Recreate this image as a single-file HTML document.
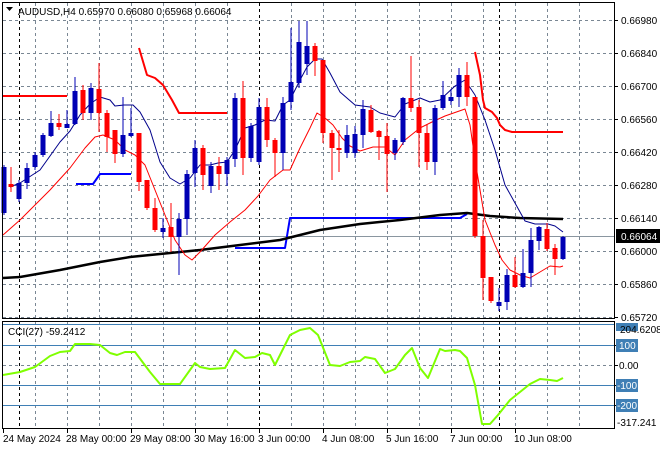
<!DOCTYPE html>
<html><head><meta charset="utf-8"><style>
html,body{margin:0;padding:0;background:#fff;width:660px;height:450px;overflow:hidden}
svg{display:block}
text{font-family:"Liberation Sans",sans-serif;font-size:10px;fill:#000}
</style></head><body>
<svg width="660" height="450" viewBox="0 0 660 450" xmlns="http://www.w3.org/2000/svg">
<rect width="660" height="450" fill="#fff"/>
<g stroke="#7a8794" stroke-width="1" stroke-dasharray="3,3" shape-rendering="crispEdges">
<path d="M3 20.5H614M3 53.5H614M3 86.5H614M3 119.5H614M3 152.5H614M3 185.5H614M3 218.5H614M3 251.5H614M3 284.5H614M3 317.5H614M3 365.5H614"/>
<path d="M35.5 3V428M67.5 3V428M99.5 3V428M131.5 3V428M163.5 3V428M195.5 3V428M227.5 3V428M291.5 3V428M323.5 3V428M355.5 3V428M387.5 3V428M419.5 3V428M451.5 3V428M483.5 3V428M515.5 3V428M547.5 3V428M579.5 3V428"/>
</g>
<g stroke="#000" stroke-dasharray="3,3" shape-rendering="crispEdges">
<path d="M19.5 3V428M259.5 3V428M499.5 3V428"/>
</g>
<path d="M3 236.5H614" stroke="#8a96a0" shape-rendering="crispEdges"/>
<g stroke="#3f7fb5" shape-rendering="crispEdges"><path d="M3 324.5H614M3 345.5H614M3 385.5H614M3 405.5H614"/></g>
<!-- thick lines -->
<g fill="none" stroke-linejoin="round">
<path d="M3 96H67M139 48L147 75L155 78L163 85L172 100L179 113H227M475 52L480 75L483 100L485 108L492 112L497 118L500 125L505 130L512 132H563" stroke="#ff0000" stroke-width="2"/>
<path d="M76 184H93L100 174H131M235 248H285L290 218H460L467 214" stroke="#0000ff" stroke-width="2"/>
<path d="M3 278L20 277L60 270L100 262L130 257L160 254L200 250L240 245L280 240L300 235L320 230L360 224L400 220L440 215L467 213L490 216L520 218L563 219" stroke="#000" stroke-width="2.5"/>
<path d="M10 187L20 183L40 170L60 142L70 131L80 115L90 104L100 97L110 100L115 106L124 105L133 105L140 112L150 130L160 162L170 178L180 184L190 178L200 165L210 165L218 163L227 162L235 150L245 128L255 125L265 120L275 121L283 105L290 100L300 80L307 67L315 59L322 59L330 73L340 92L355 105L370 107L380 113L395 117L405 104L420 98L430 102L440 100L455 86L465 80L475 95L485 120L495 150L505 185L515 203L525 221L535 224L548 224L555 226L563 232" stroke="#00008b" stroke-width="1"/>
<path d="M3 235L20 220L35 205L50 190L70 168L85 148L95 137L103 135L115 140L125 150L135 155L145 165L155 190L165 215L175 240L185 255L192 260L200 252L215 235L230 222L245 210L258 196L270 180L283 170L290 170L300 148L310 128L317 113L325 118L333 125L342 138L350 146L360 151L373 147L385 147L395 155L405 140L420 128L432 122L445 116L465 109L470 125L475 160L485 220L495 245L502 260L510 270L520 275L530 278L540 272L550 266L560 267L563 266" stroke="#ff0000" stroke-width="1"/>
<path d="M3 375L20 372L35 367L50 356L60 352L70 351L75 344L90 344L100 345L110 353L117 355L125 352L135 352L150 372L160 384L180 384L195 363L200 367L210 369L225 368L235 350L245 358L255 357L262 353L270 355L275 365L290 335L300 330L310 328L318 335L330 365L340 366L350 362L360 361L365 357L375 359L385 373L395 369L405 355L412 348L420 368L428 378L440 349L445 351L455 350L460 351L467 358L475 385L482 424L490 424L498 415L510 400L530 384L540 379L550 380L557 381L563 378" stroke="#7fff00" stroke-width="2"/>
</g>
<g id="c" shape-rendering="crispEdges">
<g fill="#0000b4">
<rect x="3.5" y="165" width="1" height="50"/><rect x="1.5" y="167" width="5" height="46"/>
<rect x="18.5" y="180" width="1" height="22"/><rect x="16.5" y="183" width="5" height="16"/>
<rect x="26.5" y="163" width="1" height="26"/><rect x="24.5" y="168" width="5" height="15"/>
<rect x="34.5" y="152" width="1" height="18"/><rect x="32.5" y="155" width="5" height="12"/>
<rect x="42.5" y="133" width="1" height="24"/><rect x="40.5" y="135" width="5" height="20"/>
<rect x="50.5" y="111" width="1" height="26"/><rect x="48.5" y="123" width="5" height="13"/>
<rect x="66.5" y="110" width="1" height="18"/><rect x="64.5" y="124" width="5" height="4"/>
<rect x="74.5" y="77" width="1" height="48"/><rect x="72.5" y="91" width="5" height="33"/>
<rect x="90.5" y="83" width="1" height="37"/><rect x="88.5" y="88" width="5" height="25"/>
<rect x="122.5" y="97" width="1" height="60"/><rect x="120.5" y="135" width="5" height="19"/>
<rect x="130.5" y="108" width="1" height="29"/><rect x="128.5" y="133" width="5" height="3"/>
<rect x="162.5" y="218" width="1" height="20"/><rect x="160.5" y="228" width="5" height="4"/>
<rect x="178.5" y="213" width="1" height="62"/><rect x="176.5" y="219" width="5" height="18"/>
<rect x="186.5" y="170" width="1" height="65"/><rect x="184.5" y="174" width="5" height="45"/>
<rect x="194.5" y="140" width="1" height="47"/><rect x="192.5" y="148" width="5" height="25"/>
<rect x="210.5" y="162" width="1" height="31"/><rect x="208.5" y="166" width="5" height="20"/>
<rect x="226.5" y="157" width="1" height="29"/><rect x="224.5" y="160" width="5" height="14"/>
<rect x="234.5" y="93" width="1" height="74"/><rect x="232.5" y="98" width="5" height="61"/>
<rect x="250.5" y="123" width="1" height="39"/><rect x="248.5" y="126" width="5" height="32"/>
<rect x="258.5" y="98" width="1" height="67"/><rect x="256.5" y="107" width="5" height="55"/>
<rect x="282.5" y="97" width="1" height="73"/><rect x="280.5" y="103" width="5" height="50"/>
<rect x="290.5" y="28" width="1" height="82"/><rect x="288.5" y="82" width="5" height="20"/>
<rect x="298.5" y="21" width="1" height="67"/><rect x="296.5" y="42" width="5" height="41"/>
<rect x="306.5" y="21" width="1" height="54"/><rect x="304.5" y="46" width="5" height="18"/>
<rect x="346.5" y="125" width="1" height="33"/><rect x="344.5" y="135" width="5" height="18"/>
<rect x="354.5" y="126" width="1" height="32"/><rect x="352.5" y="134" width="5" height="19"/>
<rect x="362.5" y="100" width="1" height="48"/><rect x="360.5" y="109" width="5" height="26"/>
<rect x="394.5" y="138" width="1" height="22"/><rect x="392.5" y="140" width="5" height="13"/>
<rect x="402.5" y="97" width="1" height="48"/><rect x="400.5" y="98" width="5" height="44"/>
<rect x="434.5" y="105" width="1" height="70"/><rect x="432.5" y="108" width="5" height="54"/>
<rect x="442.5" y="81" width="1" height="29"/><rect x="440.5" y="95" width="5" height="13"/>
<rect x="450.5" y="89" width="1" height="16"/><rect x="448.5" y="97" width="5" height="4"/>
<rect x="458.5" y="68" width="1" height="39"/><rect x="456.5" y="75" width="5" height="22"/>
<rect x="498.5" y="288" width="1" height="23"/><rect x="496.5" y="302" width="5" height="4"/>
<rect x="506.5" y="269" width="1" height="41"/><rect x="504.5" y="275" width="5" height="27"/>
<rect x="522.5" y="249" width="1" height="39"/><rect x="520.5" y="273" width="5" height="14"/>
<rect x="530.5" y="228" width="1" height="59"/><rect x="528.5" y="240" width="5" height="33"/>
<rect x="538.5" y="226" width="1" height="24"/><rect x="536.5" y="227" width="5" height="14"/>
<rect x="562.5" y="236" width="1" height="24"/><rect x="560.5" y="237" width="5" height="22"/>
</g>
<g fill="#ff0000">
<rect x="10.5" y="167" width="1" height="25"/><rect x="8.5" y="184" width="5" height="3"/>
<rect x="58.5" y="114" width="1" height="16"/><rect x="56.5" y="123" width="5" height="4"/>
<rect x="82.5" y="85" width="1" height="35"/><rect x="80.5" y="90" width="5" height="23"/>
<rect x="98.5" y="63" width="1" height="69"/><rect x="96.5" y="89" width="5" height="24"/>
<rect x="106.5" y="110" width="1" height="42"/><rect x="104.5" y="113" width="5" height="24"/>
<rect x="114.5" y="130" width="1" height="33"/><rect x="112.5" y="130" width="5" height="24"/>
<rect x="138.5" y="133" width="1" height="58"/><rect x="136.5" y="133" width="5" height="49"/>
<rect x="146.5" y="180" width="1" height="30"/><rect x="144.5" y="180" width="5" height="28"/>
<rect x="154.5" y="198" width="1" height="34"/><rect x="152.5" y="208" width="5" height="22"/>
<rect x="170.5" y="203" width="1" height="49"/><rect x="168.5" y="227" width="5" height="10"/>
<rect x="202.5" y="145" width="1" height="45"/><rect x="200.5" y="148" width="5" height="27"/>
<rect x="218.5" y="157" width="1" height="33"/><rect x="216.5" y="166" width="5" height="8"/>
<rect x="242.5" y="81" width="1" height="94"/><rect x="240.5" y="98" width="5" height="60"/>
<rect x="266.5" y="98" width="1" height="49"/><rect x="264.5" y="107" width="5" height="33"/>
<rect x="274.5" y="138" width="1" height="39"/><rect x="272.5" y="140" width="5" height="13"/>
<rect x="314.5" y="43" width="1" height="33"/><rect x="312.5" y="46" width="5" height="15"/>
<rect x="322.5" y="60" width="1" height="83"/><rect x="320.5" y="60" width="5" height="73"/>
<rect x="331.5" y="130" width="1" height="50"/><rect x="329.5" y="133" width="5" height="15"/>
<rect x="338.5" y="130" width="1" height="42"/><rect x="336.5" y="148" width="5" height="2"/>
<rect x="370.5" y="105" width="1" height="28"/><rect x="368.5" y="110" width="5" height="22"/>
<rect x="378.5" y="130" width="1" height="30"/><rect x="376.5" y="131" width="5" height="6"/>
<rect x="386.5" y="123" width="1" height="69"/><rect x="384.5" y="136" width="5" height="18"/>
<rect x="410.5" y="56" width="1" height="56"/><rect x="408.5" y="98" width="5" height="10"/>
<rect x="418.5" y="100" width="1" height="67"/><rect x="416.5" y="107" width="5" height="26"/>
<rect x="426.5" y="124" width="1" height="46"/><rect x="424.5" y="133" width="5" height="29"/>
<rect x="466.5" y="62" width="1" height="44"/><rect x="464.5" y="75" width="5" height="22"/>
<rect x="474.5" y="97" width="1" height="141"/><rect x="472.5" y="97" width="5" height="139"/>
<rect x="482.5" y="220" width="1" height="80"/><rect x="480.5" y="236" width="5" height="42"/>
<rect x="490.5" y="277" width="1" height="26"/><rect x="488.5" y="277" width="5" height="24"/>
<rect x="514.5" y="257" width="1" height="31"/><rect x="512.5" y="275" width="5" height="12"/>
<rect x="546.5" y="223" width="1" height="28"/><rect x="544.5" y="229" width="5" height="20"/>
<rect x="554.5" y="244" width="1" height="31"/><rect x="552.5" y="248" width="5" height="11"/>
</g>
</g>
<!-- frames -->
<g fill="none" stroke="#000" shape-rendering="crispEdges">
<rect x="2.5" y="2.5" width="612" height="316"/>
<rect x="2.5" y="321.5" width="612" height="107"/>
</g>
<g stroke="#000" shape-rendering="crispEdges">
<path d="M614 20.5H618M614 53.5H618M614 86.5H618M614 119.5H618M614 152.5H618M614 185.5H618M614 218.5H618M614 251.5H618M614 284.5H618M614 317.5H618M614 345.5H618M614 365.5H618M614 385.5H618M614 405.5H618M3.5 428V433M67.5 428V433M131.5 428V433M195.5 428V433M259.5 428V433M323.5 428V433M387.5 428V433M451.5 428V433M515.5 428V433"/>
</g>
<path d="M6 7H13L9.5 11Z" fill="#000"/>
<text x="18" y="15">AUDUSD,H4  0.65970 0.66080 0.65968 0.66064</text>
<text x="8" y="335">CCI(27) -59.2412</text>
<g>
<text x="621" y="24">0.66980</text>
<text x="621" y="57">0.66840</text>
<text x="621" y="90">0.66700</text>
<text x="621" y="123">0.66560</text>
<text x="621" y="156">0.66420</text>
<text x="621" y="189">0.66280</text>
<text x="621" y="222">0.66140</text>
<rect x="616" y="229" width="44" height="14" fill="#000"/>
<text x="621" y="240" style="fill:#fff">0.66064</text>
<text x="621" y="255">0.66000</text>
<text x="621" y="288">0.65860</text>
<text x="621" y="321">0.65720</text>
<rect x="616" y="323" width="22" height="8" fill="#3f7fb5"/>
<text x="620" y="333">204.6208</text>
<rect x="616" y="339" width="22" height="13" fill="#3f7fb5"/>
<text x="619" y="349" style="fill:#fff">100</text>
<text x="619" y="369">0.00</text>
<rect x="616" y="379" width="22" height="13" fill="#3f7fb5"/>
<text x="617" y="389" style="fill:#fff">-100</text>
<rect x="616" y="399" width="22" height="13" fill="#3f7fb5"/>
<text x="617" y="409" style="fill:#fff">-200</text>
<text x="617" y="426">-317.241</text>
</g>
<g>
<text x="3" y="442">24 May 2024</text>
<text x="66" y="442">28 May 00:00</text>
<text x="130" y="442">29 May 08:00</text>
<text x="194" y="442">30 May 16:00</text>
<text x="258" y="442">3 Jun 00:00</text>
<text x="322" y="442">4 Jun 08:00</text>
<text x="386" y="442">5 Jun 16:00</text>
<text x="450" y="442">7 Jun 00:00</text>
<text x="514" y="442">10 Jun 08:00</text>
</g>
</svg>
</body></html>
